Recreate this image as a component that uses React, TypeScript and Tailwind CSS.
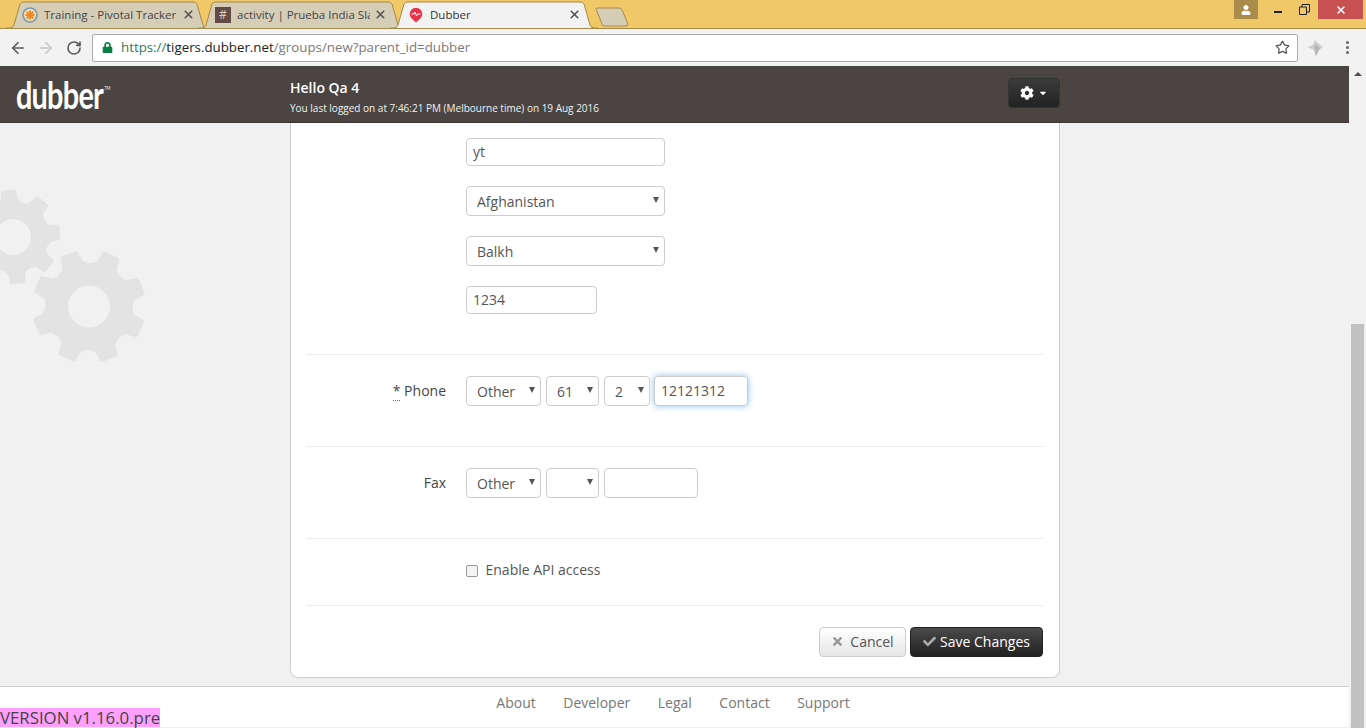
import { ArrowLeft, ArrowRight, RotateCw, Star, X } from "lucide-react"
import { FaCog, FaCheck, FaTimes, FaCaretDown, FaUser, FaLock } from "react-icons/fa"

const FONT = "font-['Open_Sans',sans-serif]"

function gearPath(cx: number, cy: number, outer: number, root: number, teeth: number, offset: number) {
    const step = (Math.PI * 2) / teeth
    const pt = (r: number, a: number) => `${(cx + r * Math.cos(a)).toFixed(2)} ${(cy + r * Math.sin(a)).toFixed(2)}`
    let d = ""
    for (let i = 0; i < teeth; i++) {
        const a = offset + i * step
        const tip = step * 0.17
        const base = step * 0.25
        d += `${i === 0 ? "M" : "L"}${pt(root, a - base)} L${pt(outer, a - tip)} L${pt(outer, a + tip)} L${pt(root, a + base)} `
        d += `Q${pt(root * 0.86, a + step / 2)} ${pt(root, a + step - base)} `
    }
    return d + "Z"
}

function Gears() {
    return (
        <svg className="absolute left-0 top-[50px]" width="160" height="210" viewBox="0 50 160 210">
            {/* coordinates are relative to the main area */}
            <g transform="translate(0,-123)">
                <path d={gearPath(13, 237, 46, 37, 8, -0.1)} fill="#e3e3e3" stroke="#e3e3e3" strokeWidth="3" strokeLinejoin="round" />
                <circle cx="13" cy="237" r="18" fill="#f1f1f1" />
                <path d={gearPath(89, 306.5, 55, 45, 8, Math.PI / 8 + 0.02)} fill="#e3e3e3" stroke="#e3e3e3" strokeWidth="4" strokeLinejoin="round" />
                <circle cx="89" cy="306.5" r="21" fill="#f1f1f1" />
            </g>
        </svg>
    )
}

function TabShape({ active, width }: { active?: boolean; width: number }) {
    return (
        <svg className="absolute left-0 top-0" width={width} height="27" viewBox={`0 0 ${width} 27`}>
            <path
                d={`M0 27 L4 27 Q7 27 8 24 L14 3 Q15 1 18 1 L${width - 18} 1 Q${width - 15} 1 ${width - 14} 3 L${width - 8} 24 Q${width - 7} 27 ${width - 4} 27 L${width} 27`}
                fill={active ? "#f2f2f2" : "#d6cdb7"}
                stroke="#a5894a"
                strokeWidth="1"
            />
        </svg>
    )
}

function Tab({ title, icon, width, active, className, pad }: { title: string; icon: React.ReactNode; width: number; active?: boolean; className?: string; pad: string }) {
    return (
        <div className={`relative h-[27px] shrink-0 ${className ?? ""}`} style={{ width }}>
            <TabShape active={active} width={width} />
            <div className={`relative flex h-full items-center ${pad}`}>
                <span className="flex w-[16px] shrink-0 justify-center">{icon}</span>
                <span className={`ml-[6px] flex-1 overflow-hidden whitespace-nowrap text-[11.500px] ${active ? "text-[#333]" : "text-[#444]"}`}>{title}</span>
                <X size={13} strokeWidth={3} className="ml-[4px] shrink-0 text-[#555]" />
            </div>
        </div>
    )
}

function BrowserChrome() {
    return (
        <div className="shrink-0">
            <div className="flex h-[29px] items-start justify-between border-b border-[#a5894a] bg-[#f0c868]">
                <div className="flex items-end pl-[6px] pt-[1px]">
                    <Tab
                        title="Training - Pivotal Tracker"
                        width={205}
                        pad="pl-[16px] pr-[16px]"
                        icon={
                            <svg width="16" height="16" viewBox="0 0 16 16">
                                <circle cx="8" cy="8" r="7" fill="#f3dcb0" stroke="#6f9cb5" strokeWidth="1.6" />
                                <path d="M8 3.500v9M3.500 8h9M4.800 4.800l6.400 6.400M11.200 4.800l-6.400 6.400" stroke="#ee8a2a" strokeWidth="2" />
                            </svg>
                        }
                    />
                    <Tab
                        title="activity | Prueba India Sla"
                        width={208}
                        pad="pl-[17px] pr-[19px]"
                        className="-ml-[13px]"
                        icon={<span className="flex h-[16px] w-[16px] items-center justify-center bg-[#644a46] text-[12px] text-[#d8cfc8]">#</span>}
                    />
                    <Tab
                        title="Dubber"
                        width={208}
                        active
                        pad="pl-[18px] pr-[17px]"
                        className="-ml-[16px]"
                        icon={
                            <svg width="14" height="16" viewBox="0 0 14 16">
                                <path d="M7 15.500 L3 11.800 A6.300 6.300 0 1 1 11 11.800 Z" fill="#e8334a" />
                                <path d="M2.500 7h2.500l1-2 1.500 4 1-2h3" fill="none" stroke="#fff" strokeWidth="1" />
                            </svg>
                        }
                    />
                    <svg className="-ml-[4px] mb-[1px]" width="36" height="20" viewBox="0 0 36 20">
                        <path d="M2 2 Q2 1 4 1 L25 1 Q27 1 28 3 L34 17 Q34 19 32 19 L10 19 Q8 19 8 17 Z" fill="#d6cdb7" stroke="#a5894a" />
                    </svg>
                </div>
                <div className="flex items-start">
                    <div className="flex h-[19px] w-[24px] items-center justify-center bg-[#a98c4c]">
                        <FaUser size={10} className="text-white" />
                    </div>
                    <div className="ml-[16px] flex h-[19px] w-[8px] items-center justify-center">
                        <span className="mt-[4px] h-[2px] w-[8px] bg-[#222]" />
                    </div>
                    <div className="ml-[16px] flex h-[19px] w-[12px] items-center justify-center">
                        <svg width="11" height="11" viewBox="0 0 11 11">
                            <path d="M.5 3h7v7.500h-7zM3 3V.5h7.500v7.500H8" fill="none" stroke="#222" />
                        </svg>
                    </div>
                    <div className="ml-[8px] mr-[3px] flex h-[19px] w-[45px] items-center justify-center bg-[#c75050]">
                        <X size={12} strokeWidth={3} className="text-white" />
                    </div>
                </div>
            </div>
            <div className="flex h-[37px] items-center bg-[#f2f2f2] pl-[9px]">
                <ArrowLeft size={18} strokeWidth={2.2} className="text-[#5a5a5a]" />
                <ArrowRight size={18} strokeWidth={2.2} className="ml-[10px] text-[#c6c6c6]" />
                <RotateCw size={16} strokeWidth={2.4} className="ml-[11px] text-[#5a5a5a]" />
                <div className="ml-[10px] flex h-[28px] w-[1206px] items-center rounded-[2px] border border-[#ababab] bg-white pl-[9px] pr-[7px]">
                    <FaLock size={11} className="text-[#0b8043]" />
                    <span className="ml-[8px] whitespace-nowrap text-[13.300px] text-[#7a7a7a]">
                        <span className="text-[#2d7d5a]">https://</span>
                        <span className="text-[#222]">tigers.dubber.net</span>/groups/new?parent_id=dubber
                    </span>
                    <Star size={15} strokeWidth={2} className="ml-auto text-[#555]" />
                </div>
                <svg className="ml-[8px]" width="18" height="18" viewBox="0 0 18 18">
                    <path d="M9 1 L13 5 L17 8 L13 11 L10 17 L8 11 L1 8 L7 6 Z" fill="#d0d0d0" />
                    <path d="M9 5 L14 9 L10 17 L8 9 Z" fill="#b5b5b5" />
                </svg>
                <div className="ml-[22px] flex flex-col gap-[2px]">
                    <span className="h-[3px] w-[3px] rounded-full bg-[#666]" />
                    <span className="h-[3px] w-[3px] rounded-full bg-[#666]" />
                    <span className="h-[3px] w-[3px] rounded-full bg-[#666]" />
                </div>
            </div>
        </div>
    )
}

function Select({ value, className }: { value: string; className: string }) {
    return (
        <div className={`relative h-[30px] ${className}`}>
            <select
                defaultValue={value}
                className="h-full w-full appearance-none rounded-[4px] border border-[#ccc] bg-white pl-[10px] text-[14px] text-[#555]"
            >
                <option>{value}</option>
            </select>
            <span className="absolute right-[6px] top-[11px] h-0 w-0 border-x-[3.500px] border-t-[6px] border-x-transparent border-t-[#555]" />
        </div>
    )
}

function TextInput({ value, className }: { value: string; className: string }) {
    return (
        <input
            readOnly
            value={value}
            className={`rounded-[4px] border border-[#ccc] bg-white px-[6px] pb-[2px] text-[14px] text-[#555] ${className}`}
        />
    )
}

function Row({ label, children }: { label: React.ReactNode; children: React.ReactNode }) {
    return (
        <div className="flex border-t border-[#eee] pb-[40px] pt-[21px]">
            <div className="w-[140px] pt-[4px] text-right text-[14px] text-[#444]">{label}</div>
            <div className="ml-[20px] flex gap-[5px]">{children}</div>
        </div>
    )
}

function Form() {
    return (
        <div className="relative ml-[290px] w-[770px] rounded-b-[8px] border-x border-b border-[#ccc] bg-white px-[15px] pb-[20px] pt-[15px]">
            <div className="ml-[160px] flex flex-col items-start gap-[20px] pb-[40px]">
                <TextInput value="yt" className="h-[28px] w-[199px]" />
                <Select value="Afghanistan" className="w-[199px]" />
                <Select value="Balkh" className="w-[199px]" />
                <TextInput value="1234" className="h-[28px] w-[131px]" />
            </div>
            <Row
                label={
                    <>
                        <span className="border-b border-dotted border-[#666]">*</span> Phone
                    </>
                }
            >
                <Select value="Other" className="w-[75px]" />
                <Select value="61" className="w-[53px]" />
                <Select value="2" className="w-[46px]" />
                <TextInput
                    value="12121312"
                    className="-ml-[1px] h-[30px] w-[94px] border-[#58a8ea] shadow-[0_0_6px_rgba(102,175,233,0.8)]"
                />
            </Row>
            <Row label="Fax">
                <Select value="Other" className="w-[75px]" />
                <Select value="" className="w-[53px]" />
                <TextInput value="" className="h-[30px] w-[94px]" />
            </Row>
            <div className="flex h-[68px] items-center border-y border-[#eee] pb-[5px] pl-[160px]">
                <span className="mt-[2px] h-[12px] w-[12px] rounded-[2px] border border-[#999] bg-[#f4f4f4]" />
                <span className="ml-[7.500px] text-[14px] text-[#555]">Enable API access</span>
            </div>
            <div className="flex justify-end gap-[4px] pr-[1px] pt-[21px]">
                <button className="flex h-[30px] w-[87px] items-center justify-center rounded-[4px] border border-[#ccc] bg-gradient-to-b from-white to-[#e6e6e6] pb-[2px] text-[14px] text-[#555]">
                    <FaTimes size={13} className="mr-[6px] text-[#999]" />
                    Cancel
                </button>
                <button className="flex h-[30px] w-[133px] items-center justify-center rounded-[4px] border border-[#222] bg-gradient-to-b from-[#4a4a4a] to-[#222] pb-[2px] text-[14px] text-white">
                    <FaCheck size={13} className="mr-[4px] text-[#aaa]" />
                    Save Changes
                </button>
            </div>
        </div>
    )
}

export default function App() {
    return (
        <div className={`flex h-[728px] w-[1366px] flex-col overflow-hidden bg-white ${FONT}`}>
            <BrowserChrome />
            <div className="flex min-h-0 flex-1">
                <div className="flex w-[1349px] flex-col">
                    <header className="flex h-[57px] shrink-0 border-b border-[#3a3634] bg-[#4a4543]">
                        <div className="flex w-[290px] origin-left scale-x-[0.76] items-center pl-[21px] font-['Lato',sans-serif] text-[38px] font-bold leading-none tracking-[-1px] text-white">
                            dubber<span className="-mt-[12px] ml-[2px] text-[5px] font-normal tracking-normal">TM</span>
                        </div>
                        <div className="flex w-[718px] flex-col pt-[12px] text-white">
                            <div className="text-[14px] font-semibold leading-[20px]">Hello Qa 4</div>
                            <div className="mt-[3px] text-[10px] leading-[14px] text-[#f1f1f1]">
                                You last logged on at 7:46:21 PM (Melbourne time) on 19 Aug 2016
                            </div>
                        </div>
                        <div className="pt-[12px]">
                            <button className="flex h-[30px] w-[52px] items-center justify-center gap-[4px] rounded-[4px] border border-[#333] bg-gradient-to-b from-[#3c3c3c] to-[#222] text-white">
                                <FaCog size={14} />
                                <FaCaretDown size={10} />
                            </button>
                        </div>
                    </header>
                    <main className="relative flex-1 bg-[#f1f1f1]">
                        <Gears />
                        <Form />
                    </main>
                    <footer className="relative h-[42px] shrink-0 border-y border-t-[#ccc] border-b-[#eee] bg-white">
                        <nav className="flex justify-center gap-[27.500px] pr-[3px] pt-[5px] text-[14px] text-[#777]">
                            <span>About</span>
                            <span>Developer</span>
                            <span>Legal</span>
                            <span>Contact</span>
                            <span>Support</span>
                        </nav>
                        <div className="absolute bottom-0 left-0 w-[160px] whitespace-nowrap bg-[#ffa0ff] text-[16.800px] leading-[19px] text-[#444]">
                            VERSION v1.16.0.pre
                        </div>
                    </footer>
                </div>
                <div className="flex w-[17px] flex-col items-center bg-[#f1f1f1]">
                    <span className="mt-[6px] h-0 w-0 border-x-[4px] border-b-[4px] border-x-transparent border-b-[#505050]" />
                    <span className="mx-auto mt-[248px] w-[13px] flex-1 bg-[#c1c1c1]" />
                </div>
            </div>
        </div>
    )
}
